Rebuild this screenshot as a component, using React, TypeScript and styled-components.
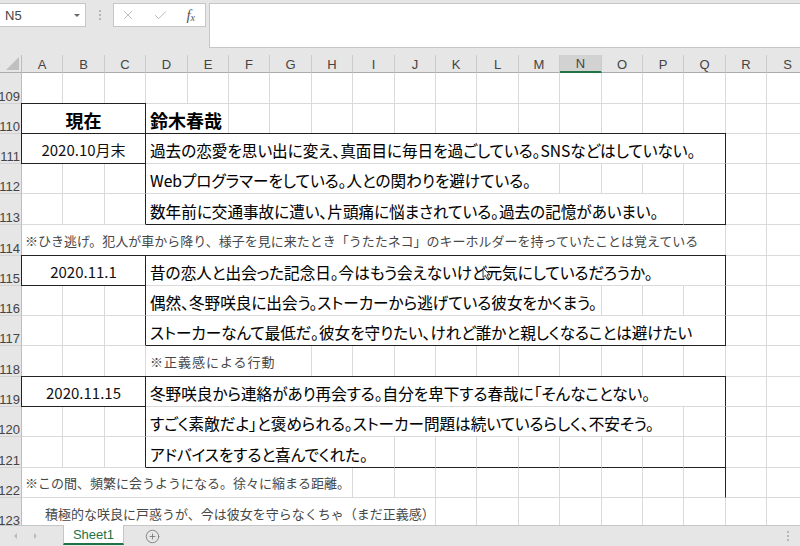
import React from 'react';
import styled, { createGlobalStyle, css } from 'styled-components';
import { X, Check, CirclePlus } from 'lucide-react';

type Kind = 'title' | 'name' | 'date' | 'body' | 'note' | 'wide' | 'indent';
type CellDef = { span?: number; text?: string; kind?: Kind; edge?: string };

const COLS = ['A', 'B', 'C', 'D', 'E', 'F', 'G', 'H', 'I', 'J', 'K', 'L', 'M', 'N', 'O', 'P', 'Q', 'R', 'S'];
const COL_WIDTHS = [41, 42, 41, 42, 41, 41, 42, 41, 42, 41, 41, 42, 41, 42, 41, 41, 42, 41, 42];
const ROW_HEIGHTS = [31, 30, 30, 30, 31, 31, 30, 30, 30, 31, 30, 30, 31, 30, 30];
const FIRST_ROW = 109;
const ACTIVE_COL = 'N';

const DARK = '#222';
const GRID = '#dadada';
const FONT_JP = '"Noto Sans CJK JP", "Noto Sans", sans-serif';
const FONT_UI = '"Liberation Sans", Arial, sans-serif';

const e = (edge = ''): CellDef => ({ edge });
const blanks = (n: number, edge = ''): CellDef[] => Array.from({ length: n }, () => ({ edge }));

const ROWS: CellDef[][] = [
  [],
  [
    { span: 3, text: '現在', kind: 'title', edge: 'tlrb' },
    { span: 2, text: '鈴木春哉', kind: 'name' },
  ],
  [
    { span: 3, text: '2020.10月末', kind: 'date', edge: 'lrb' },
    { span: 14, text: '過去の恋愛を思い出に変え、真面目に毎日を過ごしている。SNSなどはしていない。', kind: 'body', edge: 'tr' },
  ],
  [...blanks(2), e('r'), { span: 10, text: 'Webプログラマーをしている。人との関わりを避けている。', kind: 'body' }, ...blanks(3), e('r')],
  [...blanks(2), e('r'), { span: 13, text: '数年前に交通事故に遭い、片頭痛に悩まされている。過去の記憶があいまい。', kind: 'body', edge: 'b' }, e('rb')],
  [{ span: 17, text: '※ひき逃げ。犯人が車から降り、様子を見に来たとき「うたたネコ」のキーホルダーを持っていたことは覚えている', kind: 'note' }],
  [
    { span: 3, text: '2020.11.1', kind: 'date', edge: 'tlrb' },
    { span: 14, text: '昔の恋人と出会った記念日。今はもう会えないけど元気にしているだろうか。', kind: 'body', edge: 'tr' },
  ],
  [...blanks(2), e('r'), { span: 11, text: '偶然、冬野咲良に出会う。ストーカーから逃げている彼女をかくまう。', kind: 'body' }, ...blanks(2), e('r')],
  [...blanks(2), e('r'), { span: 14, text: 'ストーカーなんて最低だ。彼女を守りたい、けれど誰かと親しくなることは避けたい', kind: 'body', edge: 'rb' }],
  [...blanks(3), { span: 4, text: '※正義感による行動', kind: 'wide' }],
  [
    { span: 3, text: '2020.11.15', kind: 'date', edge: 'tlrb' },
    { span: 14, text: '冬野咲良から連絡があり再会する。自分を卑下する春哉に「そんなことない。', kind: 'body', edge: 'tr' },
  ],
  [...blanks(2), e('r'), { span: 13, text: 'すごく素敵だよ」と褒められる。ストーカー問題は続いているらしく、不安そう。', kind: 'body' }, e('r')],
  [...blanks(2), e('r'), { span: 6, text: 'アドバイスをすると喜んでくれた。', kind: 'body', edge: 'b' }, ...blanks(7, 'b'), e('rb')],
  [{ span: 8, text: '※この間、頻繁に会うようになる。徐々に縮まる距離。', kind: 'note' }, ...blanks(8), e('r')],
  [{ span: 10, text: '積極的な咲良に戸惑うが、今は彼女を守らなくちゃ（まだ正義感）', kind: 'indent' }],
];

const fillRow = (cells: CellDef[]) => {
  const used = cells.reduce((n, c) => n + (c.span ?? 1), 0);
  return [...cells, ...blanks(COLS.length - used)];
};

// top/left borders are drawn over the neighbour's gridline
const shadow = (edge: string) => {
  const list: string[] = [];
  if (edge.includes('t')) list.push(`0 -1px 0 ${DARK}`);
  if (edge.includes('l')) list.push(`-1px 0 0 ${DARK}`);
  if (edge.includes('t') && edge.includes('l')) list.push(`-1px -1px 0 ${DARK}`);
  return list.length ? list.join(', ') : 'none';
};

const noteText = css`
  font-size: 13px;
  color: #474747;
  padding-bottom: 4px;
`;

const kinds: Record<Kind, ReturnType<typeof css>> = {
  title: css`
    justify-content: center;
    font-size: 18px;
    font-weight: 700;
    padding-bottom: 3px;
  `,
  name: css`
    font-size: 18px;
    font-weight: 700;
    padding-left: 4px;
    padding-bottom: 3px;
  `,
  date: css`
    justify-content: center;
    font-size: 15px;
    padding-bottom: 3px;
    color: #111;
  `,
  body: css`
    font-size: 15.6px;
    padding-left: 4px;
    padding-bottom: 3px;
    font-feature-settings: 'palt';
    -webkit-text-stroke: 0.08px #000;
  `,
  note: css`
    ${noteText};
    padding-left: 3px;
  `,
  wide: css`
    ${noteText};
    padding-left: 4px;
    letter-spacing: 1px;
  `,
  indent: css`
    ${noteText};
    padding-left: 23px;
    padding-bottom: 3px;
  `,
};

const App = () => {
  return (
    <Window>
      <GlobalStyle />
      <Toolbar>
        <NameBox>
          <span>N5</span>
          <DropArrow />
        </NameBox>
        <Grip>
          <Dot />
          <Dot />
          <Dot />
        </Grip>
        <FxBox>
          <X size={14} color="#b4b4b4" strokeWidth={1.5} />
          <Check size={15} color="#b4b4b4" strokeWidth={1.5} />
          <Fx>
            f<sub>x</sub>
          </Fx>
        </FxBox>
        <FormulaInput />
      </Toolbar>

      <SheetArea>
        <SheetGrid>
          <Corner>
            <CornerMark />
          </Corner>
          {COLS.map(c => (
            <ColHead key={c} $active={c === ACTIVE_COL}>
              {c}
            </ColHead>
          ))}
          {ROWS.map((cells, i) => (
            <React.Fragment key={i}>
              <RowHead>{FIRST_ROW + i}</RowHead>
              {fillRow(cells).map((c, j) => (
                <Cell key={j} $span={c.span ?? 1} $edge={c.edge ?? ''} $kind={c.kind}>
                  {c.text}
                </Cell>
              ))}
            </React.Fragment>
          ))}
        </SheetGrid>
        <Pointer width="9" height="13" viewBox="0 0 9 13">
          <path d="M1 1 L1 10.5 L3.3 8.4 L5 12 L6.6 11.3 L5 7.8 L8 7.8 Z" fill="#fff" stroke="#222" strokeWidth="0.9" />
        </Pointer>
      </SheetArea>

      <TabBar>
        <TabNav>
          <NavArrow $dir="left" />
          <NavArrow $dir="right" />
        </TabNav>
        <SheetTab>Sheet1</SheetTab>
        <AddSheet>
          <CirclePlus size={15} color="#707070" strokeWidth={1.3} />
        </AddSheet>
        <TabGrip>
          <Dot />
          <Dot />
          <Dot />
        </TabGrip>
      </TabBar>
    </Window>
  );
};

export default App;

const GlobalStyle = createGlobalStyle`
  html, body {
    margin: 0;
    padding: 0;
    background: #fff;
  }
  body {
    font-family: ${FONT_JP};
  }
  * {
    box-sizing: border-box;
  }
`;

const Window = styled.div`
  width: 800px;
  height: 546px;
  display: flex;
  flex-direction: column;
  overflow: hidden;
  background: #e6e6e6;
`;

const Toolbar = styled.div`
  height: 55px;
  flex: none;
  display: flex;
  align-items: flex-start;
  padding-top: 3px;
`;

const NameBox = styled.div`
  width: 86px;
  height: 24px;
  display: flex;
  align-items: center;
  justify-content: space-between;
  padding: 0 5px 0 5px;
  background: #fff;
  border: 1px solid #c6c6c6;
  border-left: none;
  font: 13px ${FONT_UI};
  color: #444;
`;

const DropArrow = styled.span`
  width: 0;
  height: 0;
  border-left: 3px solid transparent;
  border-right: 3px solid transparent;
  border-top: 3px solid #666;
`;

const Grip = styled.div`
  width: 27px;
  height: 24px;
  display: flex;
  flex-direction: column;
  align-items: center;
  justify-content: center;
  gap: 2px;
`;

const Dot = styled.span`
  width: 2px;
  height: 2px;
  border-radius: 1px;
  background: #a6a6a6;
`;

const FxBox = styled.div`
  width: 93px;
  height: 24px;
  display: flex;
  align-items: center;
  justify-content: space-between;
  padding: 0 10px 0 7px;
  background: #fff;
  border: 1px solid #c6c6c6;
`;

const Fx = styled.span`
  font: italic 15px 'Liberation Serif', serif;
  color: #555;
  line-height: 1;

  sub {
    font-size: 10px;
    vertical-align: -1px;
  }
`;

const FormulaInput = styled.div`
  flex: 1;
  height: 45px;
  margin-left: 3px;
  background: #fff;
  border: 1px solid #c6c6c6;
  border-right: none;
`;

const SheetArea = styled.div`
  position: relative;
  flex: 1;
  overflow: hidden;
  background: #fff;
`;

const SheetGrid = styled.div`
  display: grid;
  grid-template-columns: 22px ${COL_WIDTHS.map(w => `${w}px`).join(' ')};
  grid-template-rows: 18px ${ROW_HEIGHTS.map(h => `${h}px`).join(' ')};
  width: max-content;
`;

const Corner = styled.div`
  display: flex;
  align-items: flex-end;
  justify-content: flex-end;
  padding: 0 2px 2px 0;
  background: #e6e6e6;
  border-right: 1px solid #bdbdbd;
  border-bottom: 1px solid #ababab;
`;

const CornerMark = styled.span`
  width: 0;
  height: 0;
  border-left: 13px solid transparent;
  border-bottom: 13px solid #c0c0c0;
`;

const ColHead = styled.div<{ $active: boolean }>`
  display: flex;
  align-items: center;
  justify-content: center;
  padding-top: 1px;
  background: ${({ $active }) => ($active ? '#d2d2d2' : '#e6e6e6')};
  border-right: 1px solid #cbcbcb;
  border-bottom: ${({ $active }) => ($active ? '2px solid #217346' : '1px solid #ababab')};
  font: 13px ${FONT_UI};
  color: #444;
`;

const RowHead = styled.div`
  display: flex;
  align-items: flex-end;
  justify-content: flex-end;
  overflow: hidden;
  padding: 0 1px 0 0;
  background: #e6e6e6;
  border-right: 1px solid #bdbdbd;
  border-bottom: 1px solid #d2d2d2;
  font: 13px ${FONT_UI};
  color: #444;
  line-height: 1;
`;

const Cell = styled.div<{ $span: number; $edge: string; $kind?: Kind }>`
  grid-column: span ${({ $span }) => $span};
  min-width: 0;
  display: flex;
  align-items: flex-end;
  overflow: hidden;
  white-space: nowrap;
  line-height: 20px;
  color: #000;
  border-right: 1px solid ${({ $edge }) => ($edge.includes('r') ? DARK : GRID)};
  border-bottom: 1px solid ${({ $edge }) => ($edge.includes('b') ? DARK : GRID)};
  box-shadow: ${({ $edge }) => shadow($edge)};
  ${({ $kind }) => $kind && kinds[$kind]}
`;

const Pointer = styled.svg`
  position: absolute;
  left: 482px;
  top: 212px;
`;

const TabBar = styled.div`
  height: 21px;
  flex: none;
  display: flex;
  align-items: stretch;
  background: #e6e6e6;
  border-top: 1px solid #c6c6c6;
`;

const TabNav = styled.div`
  width: 63px;
  display: flex;
  align-items: center;
  gap: 17px;
  padding-left: 14px;
`;

const NavArrow = styled.span<{ $dir: 'left' | 'right' }>`
  width: 0;
  height: 0;
  border-top: 3px solid transparent;
  border-bottom: 3px solid transparent;
  ${({ $dir }) =>
    $dir === 'left' ? 'border-right: 3px solid #bcbcbc;' : 'border-left: 3px solid #bcbcbc;'}
`;

const SheetTab = styled.div`
  width: 61px;
  height: 20px;
  margin-top: -1px;
  display: flex;
  align-items: center;
  justify-content: center;
  background: #fff;
  border-left: 1px solid #c6c6c6;
  border-right: 1px solid #c6c6c6;
  border-bottom: 2px solid #217346;
  font: 13px ${FONT_UI};
  color: #217346;
`;

const AddSheet = styled.div`
  display: flex;
  align-items: center;
  padding-left: 21px;
`;

const TabGrip = styled.div`
  margin-left: auto;
  width: 24px;
  display: flex;
  flex-direction: column;
  align-items: center;
  justify-content: center;
  gap: 2px;
`;
